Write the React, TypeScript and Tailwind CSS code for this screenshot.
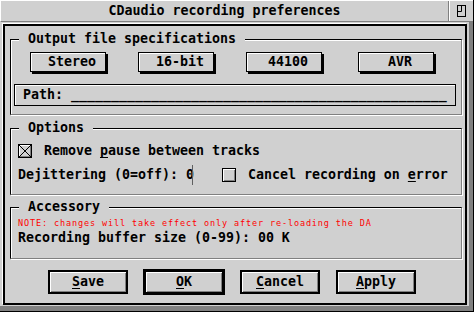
import React from 'react';

function Group({ title, className = '', children }: { title: string; className?: string; children: React.ReactNode }) {
  return (
    <div
      className={`relative ml-[5px] w-[452px] border border-t-black border-l-black border-r-[#808080] border-b-[#808080] shadow-[inset_1px_1px_0_#fff,1px_1px_0_#fff] ${className}`}
    >
      <span className="absolute left-[8px] -top-[9px] whitespace-pre bg-[#d0d0d0] px-[9px] leading-[16px]">{title}</span>
      {children}
    </div>
  );
}

function TopButton({ label, className = '' }: { label: string; className?: string }) {
  return (
    <div
      className={`flex h-[20px] w-[76px] items-center justify-center border border-black bg-[#d0d0d0] pl-[8px] shadow-[inset_1px_1px_0_#fff,2px_2px_0_#000] ${className}`}
    >
      {label}
    </div>
  );
}

function Checkbox({ checked = false, className = '' }: { checked?: boolean; className?: string }) {
  return (
    <div
      className={`h-[14px] w-[14px] shrink-0 border border-black bg-[#d0d0d0] shadow-[inset_1px_1px_0_#fff,inset_-1px_-1px_0_#808080] ${className}`}
    >
      {checked && (
        <svg className="block" width="12" height="12" viewBox="0 0 12 12">
          <path d="M0 0L12 12M12 0L0 12" stroke="#000" strokeWidth="1" fill="none" />
        </svg>
      )}
    </div>
  );
}

function BottomButton({
  first,
  rest,
  thick = false,
  className = '',
}: {
  first: string;
  rest: string;
  thick?: boolean;
  className?: string;
}) {
  return (
    <div
      className={`flex items-center justify-center border-black bg-[#d0d0d0] shadow-[inset_1px_1px_0_#fff,inset_-1px_-1px_0_#808080] ${
        thick ? 'h-[26px] w-[82px] border-[3px]' : 'h-[24px] w-[80px] border-2'
      } ${className}`}
    >
      <span className="whitespace-pre">
        <span className="underline decoration-1 underline-offset-[2px] [text-decoration-skip-ink:none]">{first}</span>
        {rest}
      </span>
    </div>
  );
}

export default function App() {
  return (
    <div className="flex h-[312px] w-[474px] flex-col overflow-hidden border-r border-b border-black bg-[#d0d0d0] font-['DejaVu_Sans_Mono',monospace] text-[13.29px] leading-[16px] font-bold text-black">
      {/* Title bar */}
      <div className="flex h-[22px] shrink-0 border-t border-l border-b border-t-white border-l-white border-b-[#808080]">
        <div className="flex flex-1 items-center justify-center whitespace-pre border-r border-r-[#808080]">
          CDaudio recording preferences
        </div>
        <div className="flex w-[24px] items-center justify-center border-l border-l-white">
          <svg width="9" height="12" viewBox="0 0 9 12" className="block">
            <rect x="0.5" y="0.5" width="8" height="11" fill="none" stroke="#000" strokeWidth="1" />
            <path d="M4.5 0.5V6.5H0.5" fill="none" stroke="#000" strokeWidth="1" />
          </svg>
        </div>
      </div>

      {/* Body */}
      <div className="flex-1 border-r-4 border-b-[5px] border-r-[#808080] border-b-[#808080] pl-[3px] pt-[2px]">
        <div className="h-[281px] w-[464px] border-2 border-black pt-[13px] shadow-[-1px_-1px_0_#fff]">
          <Group title="Output file specifications" className="pb-[8px]">
            <div className="mt-[12px] flex">
              <TopButton label="Stereo" className="ml-[19px]" />
              <TopButton label="16-bit" className="ml-[32px]" />
              <TopButton label="44100" className="ml-[32px]" />
              <TopButton label="AVR" className="ml-[36px]" />
            </div>
            <div className="mt-[12px] ml-[3px] flex h-[22px] w-[442px] items-center whitespace-pre border border-black pl-[8px] shadow-[inset_1px_1px_0_#fff]">
              {'Path: ' + '_'.repeat(47)}
            </div>
          </Group>

          <Group title="Options" className="mt-[13px] pt-[10px] pb-[7px]">
            <div className="flex h-[24px] items-center">
              <Checkbox checked className="ml-[7px]" />
              <span className="ml-[12px] whitespace-pre">
                Remove{' '}
                <span className="underline decoration-1 underline-offset-[2px] [text-decoration-skip-ink:none]">p</span>
                ause between tracks
              </span>
            </div>
            <div className="flex h-[24px] items-center">
              <span className="ml-[7px] whitespace-pre">Dejittering (0=off): 0</span>
              <div className="-ml-[2px] h-[20px] w-px bg-[#606060]" />
              <Checkbox className="ml-[29px]" />
              <span className="ml-[12px] whitespace-pre">
                Cancel recording on{' '}
                <span className="underline decoration-1 underline-offset-[2px] [text-decoration-skip-ink:none]">e</span>
                rror
              </span>
            </div>
          </Group>

          <Group title="Accessory" className="mt-[12px] pt-[10px] pb-[12px]">
            <div className="h-[10px] whitespace-pre pl-[7px] text-[8.5px] leading-[10px] font-normal tracking-[0.88px] text-[#ff0000]">
              NOTE: changes will take effect only after re-loading the DA
            </div>
            <div className="mt-[2px] h-[16px] whitespace-pre pl-[7px]">Recording buffer size (0-99): 00 K</div>
          </Group>

          <div className="mt-[10px] flex h-[26px] items-center">
            <BottomButton first="S" rest="ave" className="ml-[43px]" />
            <BottomButton first="O" rest="K" thick className="ml-[15px]" />
            <BottomButton first="C" rest="ancel" className="ml-[15px]" />
            <BottomButton first="A" rest="pply" className="ml-[16px]" />
          </div>
        </div>
      </div>
    </div>
  );
}
